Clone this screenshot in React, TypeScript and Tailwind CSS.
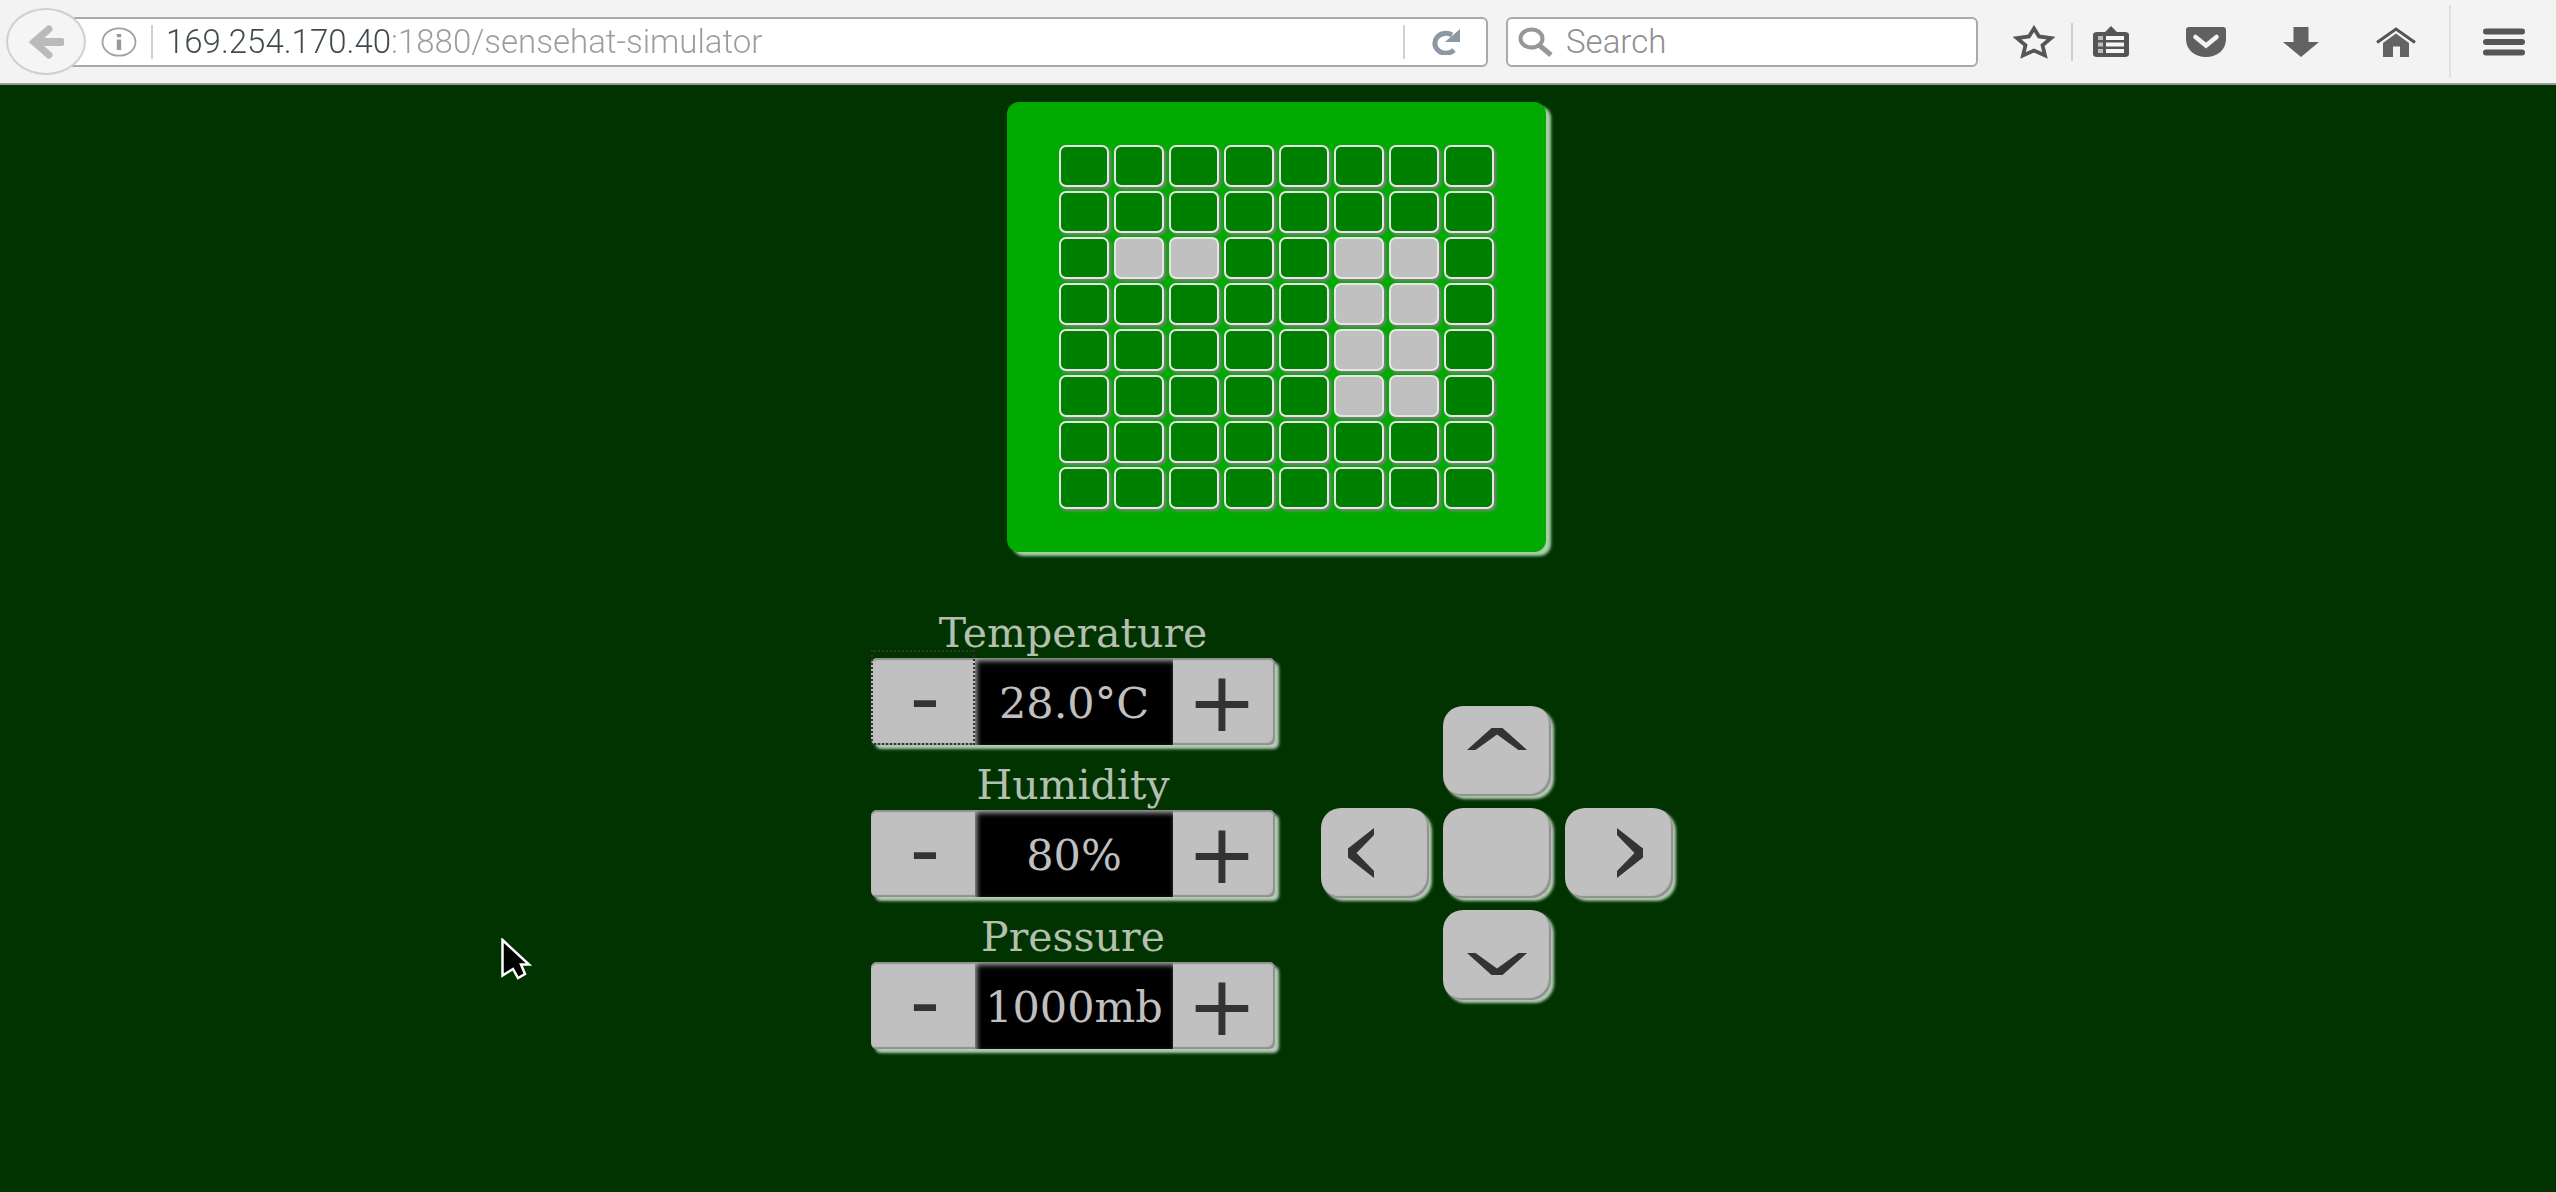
import { useState } from "react";
import type { ReactNode } from "react";

const LIT = new Set(["2-1", "2-2", "2-5", "2-6", "3-5", "3-6", "4-5", "4-6", "5-5", "5-6"]);

function ToolButton({ label, children }: { label: string; children: ReactNode }) {
  return (
    <button type="button" aria-label={label} className="flex h-10 w-12 shrink-0 items-center justify-center">
      {children}
    </button>
  );
}

function Toolbar() {
  const [url, setUrl] = useState("169.254.170.40:1880/sensehat-simulator");
  return (
    <header className="flex h-[85px] items-center border-b-2 border-[#9b9b9b] bg-[#f3f3f3] pr-7 pl-[6px] font-['Roboto',sans-serif]">
      <button
        type="button"
        aria-label="Back"
        className="z-10 flex h-[67px] w-20 shrink-0 items-center justify-center rounded-[50%] border-2 border-[#d0d0d0] bg-[#f5f5f5]"
      >
        <svg width="36" height="34" viewBox="0 0 36 34" aria-hidden="true">
          <path d="M21 4 L6 17 L21 30" fill="none" stroke="#bababa" strokeWidth="7" strokeLinecap="round" />
          <path d="M7 17 H33" fill="none" stroke="#bababa" strokeWidth="8" strokeLinecap="round" />
        </svg>
      </button>
      <div className="-ml-[14px] flex h-[50px] min-w-0 flex-1 items-center rounded-r-md border-2 border-[#aaaaaa] bg-white pl-[27px]">
        <svg width="36" height="30" viewBox="0 0 36 30" className="shrink-0" aria-hidden="true">
          <ellipse cx="18" cy="15" rx="16.5" ry="13.700" fill="none" stroke="#a2a2a2" strokeWidth="1.800" />
          <path d="M15.800 12.500H20.200V23H15.800Z M15.800 7H20.200V10.200H15.800Z" fill="#999999" />
        </svg>
        <span className="ml-[14px] h-[34px] w-[2px] shrink-0 bg-[#cfcfcf]" />
        <input
          aria-label="Address"
          value={url}
          onChange={(e) => setUrl(e.target.value)}
          className="ml-[13px] h-10 min-w-0 flex-1 bg-[linear-gradient(to_right,#3f484c_226px,#989d9f_226px)] bg-clip-text text-[33px] font-light text-transparent caret-black outline-none"
        />
        <span className="h-[34px] w-[2px] shrink-0 bg-[#d0d0d0]" />
        <button type="button" aria-label="Reload" className="flex h-10 w-[81px] shrink-0 items-center justify-center">
          <svg width="30" height="26" viewBox="0 0 30 26" aria-hidden="true">
            <path d="M23 21 A11 10 0 1 1 21 6" fill="none" stroke="#8d98a5" strokeWidth="5" />
            <path d="M29 0 V13 H14 Z" fill="#8d98a5" />
          </svg>
        </button>
      </div>
      <div className="ml-[18px] flex h-[50px] w-[472px] shrink-0 items-center rounded-md border-2 border-[#aaaaaa] bg-white pl-[10px]">
        <svg width="36" height="30" viewBox="0 0 36 30" className="shrink-0" aria-hidden="true">
          <ellipse cx="13.500" cy="11.500" rx="11" ry="9" fill="none" stroke="#979797" strokeWidth="4" />
          <path d="M21 18 L33 28" stroke="#979797" strokeWidth="5" />
        </svg>
        <input
          aria-label="Search"
          placeholder="Search"
          className="ml-3 h-10 min-w-0 flex-1 bg-transparent text-[33px] font-light outline-none placeholder:text-[#909090] placeholder:opacity-100"
        />
      </div>
      <div className="ml-8 flex h-full shrink-0 items-center">
        <ToolButton label="Bookmark this page">
          <svg width="42" height="34" viewBox="0 0 42 34" aria-hidden="true">
            <path
              d="M21 3.500 L26 11.500 L38 13.200 L29.500 20.200 L32 30.500 L21 25.500 L10 30.500 L12.500 20.200 L4 13.200 L16 11.500 Z"
              fill="none"
              stroke="#555555"
              strokeWidth="3.800"
            />
          </svg>
        </ToolButton>
        <span className="ml-[13px] h-[38px] w-[2px] bg-[#cfcfcf]" />
        <div className="ml-[14px] flex items-center gap-[47px]">
          <ToolButton label="Bookmarks">
            <svg width="36" height="32" viewBox="0 0 36 32" aria-hidden="true">
              <path d="M4 6 H12 L18 0 L24 6 H32 Q36 6 36 9 V28 Q36 31 32 31 H4 Q0 31 0 28 V9 Q0 6 4 6 Z" fill="#555555" />
              <path d="M5 10H10V14H5Z M5 16.500H10V20.500H5Z M5 23H10V27H5Z" fill="#bdbdbd" />
              <path d="M13 10H31V14H13Z M13 16.500H31V20.500H13Z M13 23H31V27H13Z" fill="#f7f7f7" />
            </svg>
          </ToolButton>
          <ToolButton label="Save to Pocket">
            <svg width="40" height="30" viewBox="0 0 40 30" aria-hidden="true">
              <path d="M3 0 H37 Q40 0 40 3 V12 C40 23 31 30 20 30 C9 30 0 23 0 12 V3 Q0 0 3 0 Z" fill="#606060" />
              <path d="M9.500 10 L20 18.500 L30.500 10" fill="none" stroke="#f3f3f3" strokeWidth="4.500" strokeLinecap="round" />
            </svg>
          </ToolButton>
          <ToolButton label="Downloads">
            <svg width="36" height="30" viewBox="0 0 36 30" aria-hidden="true">
              <path d="M10.500 0 H25.500 V15 H36 L18 30 L0 15 H10.500 Z" fill="#626262" />
            </svg>
          </ToolButton>
          <ToolButton label="Home">
            <svg width="40" height="30" viewBox="0 0 40 30" aria-hidden="true">
              <path d="M1 15.500 L20 2 L39 15.500" fill="none" stroke="#555555" strokeWidth="3" />
              <path d="M7 16 L20 6.500 L33 16 V30 H24 V19.500 H17 V30 H7 Z" fill="#636363" />
            </svg>
          </ToolButton>
        </div>
        <span className="ml-[29px] h-[73px] w-[2px] bg-[#e0e0e0]" />
        <div className="ml-[29px]">
          <ToolButton label="Menu">
            <svg width="42" height="28" viewBox="0 0 42 28" aria-hidden="true">
              <path d="M3 3.500H39 M3 14H39 M3 24.500H39" stroke="#555555" strokeWidth="6" strokeLinecap="round" />
            </svg>
          </ToolButton>
        </div>
      </div>
    </header>
  );
}

function Board() {
  return (
    <div className="mr-1 grid grid-cols-8 gap-x-[5px] gap-y-1 rounded-xl bg-[#00aa00] px-[52px] py-[43px] shadow-[5px_4px_3px_#a5cfa5]">
      {Array.from({ length: 64 }, (_, i) => {
        const lit = LIT.has(`${Math.floor(i / 8)}-${i % 8}`);
        return (
          <span
            key={i}
            className={`h-[42px] w-[50px] rounded-[7px] border-2 border-[#e6e6e6] shadow-[2px_2px_3px_#808080] ${
              lit ? "bg-[#c0c0c0]" : "bg-[#008000]"
            }`}
          />
        );
      })}
    </div>
  );
}

function Meter({ label, value, focused = false }: { label: string; value: string; focused?: boolean }) {
  return (
    <section aria-label={label} className="flex w-[404px] flex-col">
      <h2 className="h-12 text-center text-[41px] leading-[46px] text-[#b4bfb0]">{label}</h2>
      <div className="flex h-[87px] rounded-md bg-[#c0c0c0] shadow-[inset_0_2px_1px_#909090,inset_-2px_-2px_1px_#909090,4px_4px_3px_#b4ccb4]">
        <button
          type="button"
          aria-label={`Decrease ${label}`}
          className="relative flex w-[104px] items-center justify-center pb-2 pl-1 font-['DejaVu_Sans',sans-serif] text-[84px] leading-none text-[#333333]"
        >
          -
          {focused && <span className="absolute -top-2 right-0 bottom-0 left-0 border-2 border-dotted border-[#333333]" />}
        </button>
        <output className="flex flex-1 items-center justify-center bg-black pt-1 text-[43px] leading-none text-[#c0c0c0] shadow-[inset_2px_3px_5px_#a0a0a0]">
          {value}
        </output>
        <button
          type="button"
          aria-label={`Increase ${label}`}
          className="flex w-[102px] items-center justify-center pr-1 font-['DejaVu_Sans',sans-serif] text-[84px] leading-none text-[#333333]"
        >
          +
        </button>
      </div>
    </section>
  );
}

function PadButton({ label, place, children }: { label: string; place: string; children?: ReactNode }) {
  return (
    <button
      type="button"
      aria-label={label}
      className={`flex h-[90px] w-[108px] rounded-[20px] bg-[#c0c0c0] shadow-[inset_-2px_-2px_1px_#909090,3px_3px_3px_#b4ccb4] ${place}`}
    >
      {children}
    </button>
  );
}

function Joystick() {
  return (
    <div className="grid grid-cols-3 grid-rows-3 gap-x-[14px] gap-y-3">
      <PadButton label="Up" place="col-start-2 row-start-1 justify-center pt-[22px]">
        <svg width="60" height="22" viewBox="0 0 60 22" aria-hidden="true">
          <path d="M0 22 L24.500 0 H35.500 L60 22 H51.500 L30 6.500 L8.500 22 Z" fill="#333333" />
        </svg>
      </PadButton>
      <PadButton label="Left" place="col-start-1 row-start-2 items-center pl-[27px]">
        <svg width="26" height="50" viewBox="0 0 26 50" aria-hidden="true">
          <path d="M26 0 L0 20.500 V29.500 L26 50 V43 L8.500 25 L26 7 Z" fill="#333333" />
        </svg>
      </PadButton>
      <PadButton label="Center" place="col-start-2 row-start-2" />
      <PadButton label="Right" place="col-start-3 row-start-2 items-center justify-end pr-[30px]">
        <svg width="26" height="50" viewBox="0 0 26 50" aria-hidden="true">
          <path d="M0 0 L26 20.500 V29.500 L0 50 V43 L17.500 25 L0 7 Z" fill="#333333" />
        </svg>
      </PadButton>
      <PadButton label="Down" place="col-start-2 row-start-3 items-end justify-center pb-[25px]">
        <svg width="60" height="22" viewBox="0 0 60 22" aria-hidden="true">
          <path d="M0 0 L24.500 22 H35.500 L60 0 H51.500 L30 15.500 L8.500 0 Z" fill="#333333" />
        </svg>
      </PadButton>
    </div>
  );
}

export default function App() {
  return (
    <div className="flex min-h-screen flex-col bg-[#003300]">
      <Toolbar />
      <main className="relative flex flex-1 flex-col items-center pt-[17px] font-['DejaVu_Serif',serif]">
        <Board />
        <div className="mt-[58px] mr-3 flex items-center gap-[46px]">
          <div className="flex flex-col gap-[17px]">
            <Meter label="Temperature" value="28.0°C" focused />
            <Meter label="Humidity" value="80%" />
            <Meter label="Pressure" value="1000mb" />
          </div>
          <div className="pt-[46px]">
            <Joystick />
          </div>
        </div>
        <svg width="32" height="44" viewBox="0 0 32 44" className="absolute top-[853px] left-[501px]" aria-hidden="true">
          <path
            d="M1.500 2 L28 26.500 H20 L24 36 L17 40 L12 31 L1.500 37.500 Z"
            fill="#000000"
            stroke="#ffffff"
            strokeWidth="2.500"
          />
        </svg>
      </main>
    </div>
  );
}
